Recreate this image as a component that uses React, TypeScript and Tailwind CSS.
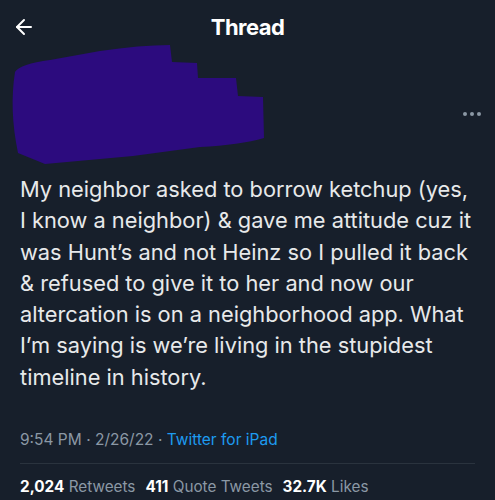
import { ArrowLeft } from "lucide-react";

const lines = [
  "My neighbor asked to borrow ketchup (yes,",
  "I know a neighbor) & gave me attitude cuz it",
  "was Hunt\u2019s and not Heinz so I pulled it back",
  "& refused to give it to her and now our",
  "altercation is on a neighborhood app. What",
  "I\u2019m saying is we\u2019re living in the stupidest",
  "timeline in history.",
];

function Redaction() {
  return (
    <svg
      className="absolute left-0 top-[-10px]"
      width="270"
      height="125"
      viewBox="0 44 270 125"
    >
      <path
        d="M15 72 Q20 64 50 60 L100 51 Q140 45 170 45 L172 62 L197 63 L198 78 L236 78 L238 96 L263 97 L264 138 Q240 145 200 147 L133 156 L45 164 L18 153 Q9 110 15 72 Z"
        fill="#2c0b7e"
      />
    </svg>
  );
}

export default function App() {
  return (
    <div
      className="h-[500px] w-[495px] overflow-hidden bg-[#171f2b] text-white"
      style={{ fontFamily: "Inter, 'Noto Sans', sans-serif" }}
    >
      <header className="relative flex h-[54px] items-center justify-center">
        <ArrowLeft className="absolute left-[12px] h-6 w-6 text-white" strokeWidth={2} />
        <h1 className="text-[22px] font-bold tracking-tight">Thread</h1>
      </header>

      <div className="relative flex h-[120px] items-center justify-end pr-[14px]">
        <Redaction />
        <div className="flex gap-[3px]">
          <span className="h-[4px] w-[4px] rounded-full bg-[#8b98a5]" />
          <span className="h-[4px] w-[4px] rounded-full bg-[#8b98a5]" />
          <span className="h-[4px] w-[4px] rounded-full bg-[#8b98a5]" />
        </div>
      </div>

      <div className="px-[20px]">
        <p className="text-[21.8px] leading-[31.3px] text-[#e7e9ea]">
          {lines.map((l) => (
            <span key={l} className="block whitespace-nowrap">
              {l}
            </span>
          ))}
        </p>

        <div className="mt-[35px] text-[15.5px] leading-6 text-[#8b98a5]">
          9:54 PM · 2/26/22 · <span className="text-[#1d9bf0]">Twitter for iPad</span>
        </div>

        <div className="mt-[11px] border-t border-[#2a333e]" />

        <div className="mt-[11px] flex gap-[10px] text-[15.3px] leading-6 text-[#8b98a5]">
          <span>
            <b className="font-bold text-white">2,024</b> Retweets
          </span>
          <span>
            <b className="font-bold text-white">411</b> Quote Tweets
          </span>
          <span>
            <b className="font-bold text-white">32.7K</b> Likes
          </span>
        </div>
      </div>
    </div>
  );
}
